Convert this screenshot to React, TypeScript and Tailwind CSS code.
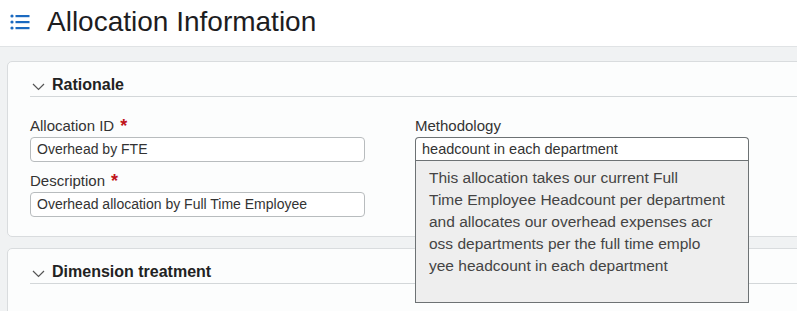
import React from 'react';

// ─── Small pieces ──────────────────────────────────────

function ListIcon() {
  return (
    <svg width="20" height="16" viewBox="0 0 20 16" className="text-[#1b6ac0]">
      <circle cx="2" cy="2" r="1.6" fill="currentColor" />
      <circle cx="2" cy="8" r="1.6" fill="currentColor" />
      <circle cx="2" cy="14" r="1.6" fill="currentColor" />
      <rect x="5.5" y="1" width="14" height="2.2" fill="currentColor" />
      <rect x="5.5" y="7" width="14" height="2.2" fill="currentColor" />
      <rect x="5.5" y="13" width="14" height="2.2" fill="currentColor" />
    </svg>
  );
}

function Chevron() {
  return (
    <svg width="13" height="8" viewBox="0 0 13 8" className="ml-[2px] mr-[7px] mt-[5px] text-[#555]">
      <polyline points="1,1 6.5,6.5 12,1" fill="none" stroke="currentColor" strokeWidth="1.2" />
    </svg>
  );
}

function SectionHeader({ title }: { title: string }) {
  return (
    <div className="flex items-center h-[35px] pt-[11px] border-b border-[#d3d7d9]">
      <Chevron />
      <span className="text-[16px] font-bold text-[#222] leading-none">{title}</span>
    </div>
  );
}

function Label({ text, required }: { text: string; required?: boolean }) {
  return (
    <div className="h-[20px] flex items-end text-[15px] text-[#333] leading-[18px]">
      {text}
      {required && <span className="ml-[6px] text-[#c0141b] text-[18px] font-bold leading-[18px]">*</span>}
    </div>
  );
}

function TextInput({ value }: { value: string }) {
  return (
    <div className="mt-[2px] h-[25px] flex items-center px-[6px] border border-[#b8bcbe] rounded-[4px] bg-white text-[14px] text-[#333]">
      {value}
    </div>
  );
}

// ─── Main ──────────────────────────────────────────────

export default function App() {
  return (
    <div className="w-[797px] h-[311px] overflow-hidden bg-[#f0f2f3] font-['Liberation_Sans',Arial,sans-serif]">
      {/* ── Page header ─────────────────────── */}
      <div className="h-[47px] bg-white border-b border-[#e0e3e5] flex items-center pl-[10px] pb-[3px]">
        <ListIcon />
        <h1 className="ml-[17px] text-[28px] text-[#1d1d1f] leading-none">Allocation Information</h1>
      </div>

      <div className="pl-[7px] pt-[14px] -mr-[20px]">
        {/* ── Rationale card ─────────────────── */}
        <div className="bg-[#fcfdfd] border border-[#d9dcde] rounded-[5px] pl-[22px] pb-[19px]">
          <SectionHeader title="Rationale" />
          <div className="flex gap-[50px] mt-[18px]">
            <div className="w-[335px]">
              <Label text="Allocation ID" required />
              <TextInput value="Overhead by FTE" />
              <div className="mt-[8px]">
                <Label text="Description" required />
                <TextInput value="Overhead allocation by Full Time Employee" />
              </div>
            </div>
            <div className="w-[334px] relative">
              <Label text="Methodology" />
              <div className="mt-[2px] h-[24px] flex items-center px-[6px] border border-[#6d7274] border-b-0 rounded-t-[4px] bg-white text-[14.5px] text-[#333]">
                headcount in each department
              </div>
              <div className="absolute left-0 right-0 top-[45px] h-[143px] z-10 bg-[#eeeeee] border border-[#6d7274] pl-[13px] pt-[6px] text-[15.5px] leading-[22px] text-[#444]">
                This allocation takes our current Full
                <br />
                Time Employee Headcount per department
                <br />
                and allocates our overhead expenses acr
                <br />
                oss departments per the full time emplo
                <br />
                yee headcount in each department
              </div>
            </div>
          </div>
        </div>

        {/* ── Dimension treatment card ───────── */}
        <div className="mt-[11px] h-[100px] bg-[#fcfdfd] border border-[#d9dcde] rounded-[5px] pl-[22px]">
          <SectionHeader title="Dimension treatment" />
        </div>
      </div>
    </div>
  );
}
